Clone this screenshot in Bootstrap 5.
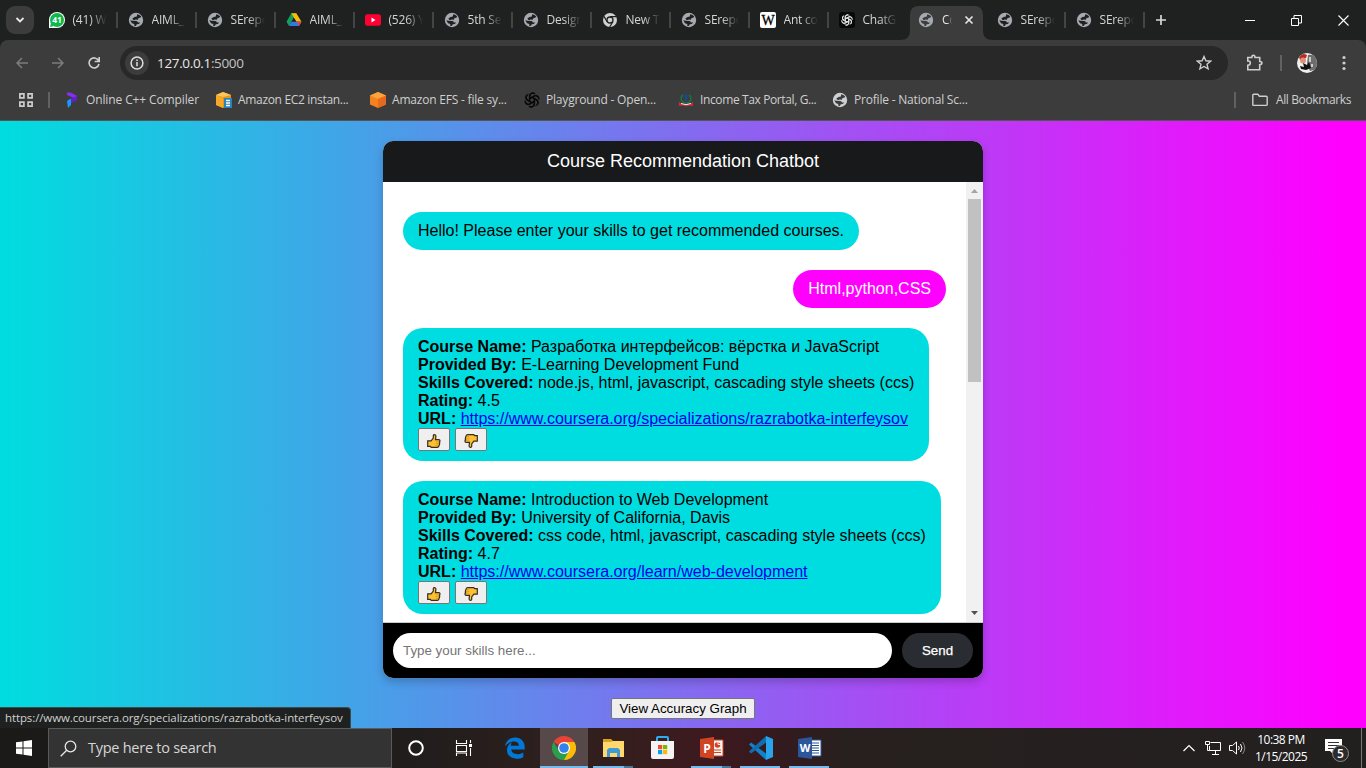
<!DOCTYPE html>
<html lang="en">
<head>
<meta charset="utf-8">
<meta name="viewport" content="width=device-width, initial-scale=1">
<title>Course Recommendation Chatbot</title>
<link href="https://cdn.jsdelivr.net/npm/bootstrap@5.3.0/dist/css/bootstrap.min.css" rel="stylesheet">
<style>
  body { font-family: "Open Sans", "Noto Sans", sans-serif; font-size: 12px; line-height: 16px; height: 768px; width: 1366px; background: #1f2120; }
  svg { display: block; flex-shrink: 0; }
  .tabstrip { height: 40px; background: #1f2120; color: #d4d4d4; }
  .tab-menu { width: 28px; height: 28px; margin: 0 5px 0 6px; border-radius: 9px; background: #3c3c3c; }
  .tab-item { width: 79px; height: 40px; padding-left: 9.5px; gap: 8px; position: relative; flex-shrink: 0; }
  .tab-item.ruled { background: linear-gradient(#444,#444) right 0 center / 2px 16px no-repeat; }
  .tab-text { width: 34px; overflow: hidden; white-space: nowrap; letter-spacing: -.2px; -webkit-mask-image: linear-gradient(90deg,#000 50%,transparent); mask-image: linear-gradient(90deg,#000 50%,transparent); }
  .tab-item.current { padding-left: 10px; }
  .current .tab-text { width: 10px; color: #e6e6e6; }
  .current > * { position: relative; }
  .current > .tab-shape { position: absolute; left: -8px; top: 6px; }
  .toolbar { height: 46px; background: #3c3c3c; border-radius: 8px 8px 0 0; padding-right: 12px; }
  .omnibox { height: 34px; width: 1108px; border-radius: 17px; background: #282828; margin-left: 20px; padding: 0 16px 0 5px; color: #e8e8e8; }
  .info-dot { width: 24px; height: 24px; border-radius: 50%; background: #3c3c3c; }
  .host { font-size: 13.5px; letter-spacing: -.34px; margin-left: 8px; }
  .host span { color: #c4c4c4; }
  .bookmarks { height: 35px; background: #3c3c3c; color: #cfcfcf; border-bottom: 1px solid #555; padding-bottom: 6px; }
  .bm { gap: 6px; white-space: nowrap; height: 28px; flex-shrink: 0; }
  .bm span { letter-spacing: -.2px; }
  .bm .airy { letter-spacing: -.12px; }
  .bm .tight { letter-spacing: -.38px; }
  .vbar { width: 2px; height: 16px; background: #616161; }
  .page { height: 607px; background: linear-gradient(90deg,#00dddf,#f0f 98%); font-family: "Liberation Sans", Arial, sans-serif; position: relative; padding-top: 20px; }
  .chat { width: 600px; height: 537px; border-radius: 10px; overflow: hidden; background: #fff; box-shadow: 0 4px 8px rgba(0,0,0,.2); }
  .chat-head { height: 41px; background: #17191b; color: #fff; font-size: 18px; line-height: 40px; }
  .chat-log { height: 440px; padding: 30px 20px 0; font-size: 16px; line-height: 18px; color: #000; gap: 20px; }
  .bubble { background: #00dde0; border-radius: 20px; padding: 10px 15px; white-space: nowrap; }
  .bubble.mine { background: #f0f; color: #fff; }
  .bubble a { color: #00e; }
  .vote { width: 32px; height: 23px; background: #efefef; border: 1px solid #767676; border-radius: 2px; padding: 5px 0 0; }
  .scroller { width: 17px; height: 440px; background: #f1f1f1; }
  .scroller .thumb { width: 13px; height: 183px; background: #c1c1c1; }
  .chat-foot { height: 56px; background: #000; border-top: 1px solid #ccc; padding: 10px; gap: 10px; }
  .chat-foot input { height: 35px; border: 0; border-radius: 20px; padding: 0 10px; font-size: 13.33px; width: 499px; }
  .chat-foot input::placeholder { color: #757575; }
  .send { width: 71px; height: 35px; border: 0; border-radius: 20px; background: #292d31; color: #fff; font-size: 13.33px; -webkit-text-stroke: .25px #fff; }
  .graph-btn { width: 144px; height: 21px; margin-top: 20px; background: #efefef; border: 1px solid #767676; border-radius: 2px; font-size: 13.33px; line-height: 18px; padding: 0; color: #000; white-space: nowrap; }
  .status { position: absolute; left: 0; bottom: 0; width: 351px; height: 21px; background: #1f2120; color: #d0d0d0; border-top: 1px solid #3b4b4e; border-right: 1px solid #3b4b4e; border-radius: 0 4px 0 0; padding-left: 5px; font-family: "Open Sans", sans-serif; font-size: 11.5px; line-height: 20px; white-space: nowrap; letter-spacing: -.11px; }
  .taskbar { height: 40px; background: linear-gradient(90deg,#1b1a19 0,#201d1c 410px,#2b1f1d 530px,#341e1e 620px,#3d1a1f 700px,#37191e 760px,#27201f 850px,#22201f 1366px); color: #fff; }
  .start { width: 48px; }
  .search { width: 344px; height: 40px; background: #333; border: 1px solid #5b5b5b; padding-left: 11px; gap: 11px; font-size: 14.5px; color: #d6d6d6; letter-spacing: -.26px; }
  .app { width: 49px; height: 40px; position: relative; display: flex; align-items: center; justify-content: center; flex-shrink: 0; }
  .app.narrow { width: 48px; }
  .app.wide { width: 52px; padding-left: 2px; }
  .app.open::after { content: ""; position: absolute; bottom: 0; left: 4px; width: 40px; height: 2px; background: #76b9ed; }
  .app.multi::after { background: linear-gradient(90deg,#76b9ed 31px,#4c7699 31px); }
  .app.active { width: 48px; background: #57494a; margin-right: 1px; }
  .app.active::after { left: 0; width: 48px; }
  .clock { width: 60px; font-size: 12px; line-height: 17.500px; text-align: center; white-space: nowrap; letter-spacing: -.52px; }
  .notice { position: relative; width: 25px; height: 26px; top: 4px; }
  .notice b { position: absolute; left: 7px; top: 6px; width: 17px; height: 17px; border-radius: 50%; border: 1px solid #8b8b8b; background: #2c2b2b; font-size: 12px; line-height: 15px; text-align: center; font-weight: 600; }
</style>
</head>
<body class="overflow-hidden">
<svg width="0" height="0" class="position-absolute" aria-hidden="true">
  <symbol id="globe" viewBox="0 0 16 16"><circle cx="8" cy="8" r="7.2" fill="currentColor"/><path d="M9.200 2.300q2.600.2 4 2.200-.8 1.700-2.600 1.500l-.8 1.800-2.300-.4q-.6 1-2 .6L4.300 6.600 6.600 5l2.200-.6zM2.300 8.200l2.300.5 3.700.3q1.700.2 1.500 1.400l2.400.2-1.400 1.500-2 .2-1 1.800-1.600-.4.1-1.700-2.300-.8z" fill="var(--cut,#1f2120)"/></symbol>
  <symbol id="knot" viewBox="0 0 16 16"><g fill="none" stroke="currentColor" stroke-width="1.300"><path id="k" d="M5.600 9.400V4.200a3.200 3.200 0 0 1 5.500-2.200M5.600 6.600 9.800 4.200a3.200 3.200 0 0 1 4.700 1.500"/><use href="#k" transform="rotate(60 8 8)"/><use href="#k" transform="rotate(120 8 8)"/><use href="#k" transform="rotate(180 8 8)"/><use href="#k" transform="rotate(240 8 8)"/><use href="#k" transform="rotate(300 8 8)"/></g></symbol>
  <symbol id="like" viewBox="0 0 14 14"><path d="M.700 6.800h3.400L6.300 4V1.600Q6.500.600 7.600.700q1.300.2 1.300 1.400L8.500 5.600h3.300q1.300.1 1.200 1.500-.1.700-.6 1 .7.900 0 1.800.3 1-.4 1.600 0 1.700-1.600 1.800H4.200l-.8-.9H.700z" fill="#ffc132" stroke="#352e22" stroke-width="1.200"/><path d="M8.800 7.800h3M8.800 9.600h3M8.800 11.400h2.500" stroke="#d78c17" stroke-width=".7"/></symbol>
</svg>

<header>
  <div class="tabstrip d-flex align-items-center">
    <div class="tab-menu d-flex align-items-center justify-content-center"><svg width="10" height="8" viewBox="0 0 10 8"><path d="m1.500 2 3.500 3.500L8.500 2" fill="none" stroke="#e8e8e8" stroke-width="1.800"/></svg></div>
    <div class="tab-item ruled d-flex align-items-center"><svg width="16" height="16"><path d="M0 16V8a8 8 0 1 1 8 8z" fill="#fff"/><circle cx="8" cy="8" r="7" fill="#10b84c"/><path d="M1 15l1-4 3 3z" fill="#10b84c"/><text x="8" y="11" font-size="8.500" font-weight="700" fill="#fff" text-anchor="middle">41</text></svg><span class="tab-text">(41) W</span></div>
    <div class="tab-item ruled d-flex align-items-center"><svg width="16" height="16" color="#a5a9b0"><use href="#globe"/></svg><span class="tab-text">AIML_</span></div>
    <div class="tab-item ruled d-flex align-items-center"><svg width="16" height="16" color="#a5a9b0"><use href="#globe"/></svg><span class="tab-text">SErepo</span></div>
    <div class="tab-item ruled d-flex align-items-center"><svg width="16" height="16"><path d="M5.300 1.300h5L8 5.300 3 14 .500 9.800z" fill="#159f55"/><path d="M5.300 1.300h5l5.200 8.500h-5z" fill="#fbbc04"/><path d="M5.400 9.800h10.100L13 14H3z" fill="#3478e5"/><path d="m11 9.800 2 4.200 2.500-4.200z" fill="#e94235"/></svg><span class="tab-text">AIML_</span></div>
    <div class="tab-item ruled d-flex align-items-center"><svg width="16" height="16"><rect y="2.300" width="16" height="11.500" rx="2.500" fill="#ff0033"/><path d="m6.500 5.500 4 2.500-4 2.500z" fill="#fff"/></svg><span class="tab-text">(526) Y</span></div>
    <div class="tab-item ruled d-flex align-items-center"><svg width="16" height="16" color="#a5a9b0"><use href="#globe"/></svg><span class="tab-text">5th Ser</span></div>
    <div class="tab-item ruled d-flex align-items-center"><svg width="16" height="16" color="#a5a9b0"><use href="#globe"/></svg><span class="tab-text">Design</span></div>
    <div class="tab-item ruled d-flex align-items-center"><svg width="16" height="16"><circle cx="8" cy="8" r="7" fill="#d0d0d0"/><circle cx="8" cy="8" r="3" fill="#d0d0d0" stroke="#1f2120" stroke-width="1.300"/><path d="M8 4.700h6.300M5.100 9.700 2 4.400M10.900 9.700 7.700 15" stroke="#1f2120" stroke-width="1.200"/></svg><span class="tab-text">New Ta</span></div>
    <div class="tab-item ruled d-flex align-items-center"><svg width="16" height="16" color="#a5a9b0"><use href="#globe"/></svg><span class="tab-text">SErepo</span></div>
    <div class="tab-item ruled d-flex align-items-center"><svg width="16" height="16"><rect width="16" height="16" rx="2" fill="#fff"/><text x="8" y="12.500" font-family="Liberation Serif" font-size="14" fill="#000" stroke="#000" stroke-width=".3" text-anchor="middle">W</text></svg><span class="tab-text">Ant col</span></div>
    <div class="tab-item d-flex align-items-center"><svg width="16" height="16" color="#e5e5e5"><rect width="16" height="16" rx="3" fill="#080808"/><use href="#knot" x="2" y="2" width="12" height="12"/></svg><span class="tab-text">ChatGP</span></div>
    <div class="tab-item current d-flex align-items-center"><svg class="tab-shape" width="93" height="34"><path d="M0 34q10 0 10-9V9Q10 0 19 0h55q9 0 9 9v16q0 9 10 9z" fill="#3c3c3c"/></svg><svg width="16" height="16" style="--cut:#3c3c3c" color="#a5a9b0"><use href="#globe"/></svg><span class="tab-text">Co</span><svg width="10" height="10" viewBox="0 0 10 10" class="ms-1"><path d="m1.500 1.500 7 7m0-7-7 7" stroke="#e5e5e5" stroke-width="1.700"/></svg></div>
    <div class="tab-item ruled d-flex align-items-center"><svg width="16" height="16" color="#a5a9b0"><use href="#globe"/></svg><span class="tab-text">SErepo</span></div>
    <div class="tab-item ruled d-flex align-items-center"><svg width="16" height="16" color="#a5a9b0"><use href="#globe"/></svg><span class="tab-text">SErepo</span></div>
    <svg width="12" height="12" style="margin-left:10px"><path d="M6 1v10M1 6h10" stroke="#d6d6d6" stroke-width="1.700"/></svg>
    <div class="d-flex align-items-center ms-auto" style="gap:36px;padding-right:17px"><svg width="10" height="10"><path d="M0 5.500h10" stroke="#fff"/></svg><svg width="11" height="11"><path d="M.500 3.500h7v7h-7zM3 3V.500h7.500V8H8" fill="none" stroke="#fff"/></svg><svg width="11" height="11"><path d="m.500.500 10 10m0-10-10 10" stroke="#fff" stroke-width="1.100"/></svg></div>
  </div>

  <div class="toolbar d-flex align-items-center">
    <div class="d-flex align-items-center" style="padding-left:16px;gap:24px">
      <svg width="12" height="12"><path d="M12 6H1m5-5L1 6l5 5" fill="none" stroke="#7c7c7c" stroke-width="1.500"/></svg>
      <svg width="12" height="12"><path d="M0 6h11M6 1l5 5-5 5" fill="none" stroke="#7c7c7c" stroke-width="1.500"/></svg>
      <svg width="12" height="12"><path d="M10.500 3.500A5 5 0 1 0 11 7M11.200 0v4.500H6.700" fill="none" stroke="#d0d0d0" stroke-width="1.600"/></svg>
    </div>
    <div class="omnibox d-flex align-items-center">
      <span class="info-dot d-flex align-items-center justify-content-center"><svg width="14" height="14"><circle cx="7" cy="7" r="5.900" fill="none" stroke="#dedede" stroke-width="1.500"/><path d="M7 6v4.300M7 3.500V5" stroke="#dedede" stroke-width="1.500"/></svg></span>
      <span class="host">127.0.0.1<span>:5000</span></span>
      <svg width="16" height="16" class="ms-auto"><path d="m8 1.500 1.900 4.300 4.700.4L11 9.300l1.100 4.600L8 11.500l-4.100 2.400L5 9.300 1.400 6.200l4.700-.4z" fill="none" stroke="#cecece" stroke-width="1.400"/></svg>
    </div>
    <svg width="18" height="18" style="margin-left:18px"><path d="M1.800 3.500h4q0-2.300 1.600-2.300t1.600 2.300h4.700v4q2.200 0 2.200 1.600t-2.200 1.600v5H1.800v-4.400q2.500 0 2.500-2.200T1.800 7z" fill="none" stroke="#cecece" stroke-width="1.600"/></svg>
    <span class="vbar" style="margin-left:16px"></span>
    <svg width="20" height="20" style="margin-left:15px"><defs><clipPath id="av"><circle cx="10" cy="10" r="10"/></clipPath></defs><g clip-path="url(#av)"><path fill="#f1efed" d="M0 0h20v20H0z"/><path d="M2 4q3-5 8-2l-1 3-6 2z" fill="#b52c20"/><circle cx="6" cy="7.500" r="3" fill="#dc9379"/><path d="M11 2q7-1 9 5v9l-7 2-3-7z" fill="#6d6d6d"/><path d="m6 10 4 2 2-3 2 6-5 2-5-1-1-3 4 1z" fill="#111"/><path d="M12 4h2v5h-2zM14 11h2v3h-2z" fill="#ccc"/></g></svg>
    <svg width="4" height="16" class="ms-auto" style="margin-right:8px"><g fill="#cecece"><circle cx="2" cy="2.500" r="1.600"/><circle cx="2" cy="8" r="1.600"/><circle cx="2" cy="13.500" r="1.600"/></g></svg>
  </div>

  <div class="bookmarks d-flex align-items-center">
    <svg width="14" height="14" style="margin-left:19px"><path d="M.900.900h4v4h-4zm8.200 0h4v4h-4zM.900 9.100h4v4h-4zm8.200 0h4v4h-4z" fill="none" stroke="#cecece" stroke-width="1.700"/></svg>
    <span class="vbar" style="margin-left:15px"></span>
    <div class="d-flex bm align-items-center" style="margin-left:14px;width:152px"><svg width="16" height="16"><path d="M3 .500h3.500L13 4v4L6 11l4-5-7-3z" fill="#8730f5"/><path d="M7 6.500 13 4v4L7 11z" fill="#6420c4"/><path d="M3 9l4-2.500V13l-3 3z" fill="#1899ff"/></svg><span class="airy">Online C++ Compiler</span></div>
    <div class="d-flex bm align-items-center" style="width:154px"><svg width="16" height="16"><path d="M0 3 7 0l8 3v10l-8 3-7-3z" fill="#e8941b"/><path d="m0 3 7-3 8 3-8 2z" fill="#ffc65c"/><path d="M0 3.500 7 5.500V16l-7-3z" fill="#f5a927"/><path d="M8 6h8v10H8z" fill="#2a84b8"/><path d="M10 8.500h4m-4 2.500h4m-4 2.500h4" stroke="#fff" stroke-width="1.300"/></svg><span style="letter-spacing:-.32px">Amazon EC2 instan...</span></div>
    <div class="d-flex bm align-items-center" style="width:154px"><svg width="16" height="16"><path d="m8 0 8 3.500v9L8 16l-8-3.500v-9z" fill="#f58220"/><path d="m0 3.500 8-3.500 8 3.500L8 7z" fill="#fba43b"/><path d="m8 7 8-3.500v9L8 16z" fill="#e86a1d"/></svg><span>Amazon EFS - file sy...</span></div>
    <div class="d-flex bm align-items-center" style="width:154px"><svg width="16" height="16" color="#080808"><use href="#knot"/></svg><span>Playground - Open...</span></div>
    <div class="d-flex bm align-items-center" style="width:154px"><svg width="16" height="16"><path d="M5 3a5 4.500 0 1 0 6 0" fill="none" stroke="#167347" stroke-width="1.600"/><path d="M8 2v7M6.500 4.500h3" stroke="#164a99" stroke-width="2"/><path d="m1 9.500 2 2q5 2.500 10 0l2-2v4.500l-3-.5q-4 1.500-8 0L1 14z" fill="#d3283b"/><path d="M3 11.500q5 2.400 10 0" fill="none" stroke="#eee"/></svg><span class="tight">Income Tax Portal, G...</span></div>
    <div class="d-flex bm align-items-center"><svg width="16" height="16" color="#cdd0d3" style="--cut:#3c3c3c"><use href="#globe"/></svg><span>Profile - National Sc...</span></div>
    <span class="vbar ms-auto"></span>
    <div class="d-flex bm align-items-center" style="margin-left:16px;padding-right:15px;gap:8px"><svg width="16" height="14"><path d="M.800 2.200q0-1 1-1h4l1.600 2h6.800q1 0 1 1v7.200q0 1-1 1H1.800q-1 0-1-1z" fill="none" stroke="#cecece" stroke-width="1.400"/></svg><span class="tight">All Bookmarks</span></div>
  </div>
</header>

<main class="page d-flex flex-column align-items-center">
  <section class="chat d-flex flex-column">
    <h1 class="chat-head text-center m-0 fw-normal">Course Recommendation Chatbot</h1>
    <div class="d-flex">
      <div class="chat-log d-flex flex-column flex-grow-1 align-items-start">
        <div class="bubble">Hello! Please enter your skills to get recommended courses.</div>
        <div class="bubble mine align-self-end">Html,python,CSS</div>
        <div class="bubble">
          <div><strong>Course Name:</strong> Разработка интерфейсов: вёрстка и JavaScript</div>
          <div><strong>Provided By:</strong> E-Learning Development Fund</div>
          <div><strong>Skills Covered:</strong> node.js, html, javascript, cascading style sheets (ccs)</div>
          <div><strong>Rating:</strong> 4.5</div>
          <div><strong>URL:</strong> <a href="#">https://www.coursera.org/specializations/razrabotka-interfeysov</a></div>
          <div class="d-flex" style="gap:5px"><button class="vote d-flex justify-content-center" aria-label="Like"><svg width="14" height="14"><use href="#like"/></svg></button><button class="vote d-flex justify-content-center" aria-label="Dislike"><svg width="14" height="14"><use href="#like" transform="rotate(180 7 7)"/></svg></button></div>
        </div>
        <div class="bubble">
          <div><strong>Course Name:</strong> Introduction to Web Development</div>
          <div><strong>Provided By:</strong> University of California, Davis</div>
          <div><strong>Skills Covered:</strong> css code, html, javascript, cascading style sheets (ccs)</div>
          <div><strong>Rating:</strong> 4.7</div>
          <div><strong>URL:</strong> <a href="#">https://www.coursera.org/learn/web-development</a></div>
          <div class="d-flex" style="gap:5px"><button class="vote d-flex justify-content-center" aria-label="Like"><svg width="14" height="14"><use href="#like"/></svg></button><button class="vote d-flex justify-content-center" aria-label="Dislike"><svg width="14" height="14"><use href="#like" transform="rotate(180 7 7)"/></svg></button></div>
        </div>
      </div>
      <div class="scroller d-flex flex-column align-items-center">
        <svg width="17" height="17"><path d="m5 11 3.500-4 3.500 4z" fill="#a3a3a3"/></svg>
        <div class="thumb"></div>
        <svg width="17" height="17" class="mt-auto"><path d="m5 6 3.500 4L12 6z" fill="#505050"/></svg>
      </div>
    </div>
    <div class="chat-foot d-flex"><input type="text" placeholder="Type your skills here..."><button class="send">Send</button></div>
  </section>
  <button class="graph-btn">View Accuracy Graph</button>
  <div class="status">https://www.coursera.org/specializations/razrabotka-interfeysov</div>
</main>

<footer class="taskbar d-flex align-items-center">
  <div class="start d-flex justify-content-center"><svg width="16" height="16"><path d="M0 2.300 6.500 1.400v6H0zM7.500 1.200 16 0v7.400H7.500zM0 8.400h6.500v6.200L0 13.700zM7.500 8.400H16V16l-8.500-1.200z" fill="#fff"/></svg></div>
  <div class="search d-flex align-items-center"><svg width="17" height="17"><circle cx="10.500" cy="6.500" r="5.300" fill="none" stroke="#e6e6e6" stroke-width="1.300"/><path d="m6.700 10.300-6 6" stroke="#e6e6e6" stroke-width="1.300"/></svg><span>Type here to search</span></div>
  <div class="app narrow"><svg width="16" height="16"><circle cx="8" cy="8" r="6.800" fill="none" stroke="#fff" stroke-width="2"/></svg></div>
  <div class="app narrow"><svg width="18" height="16"><path d="M1.500 0v3.500h10V0M1.500 5.500h10v6h-10zM1.500 16v-3h10v3M15.500 0v3M15.500 8v8" fill="none" stroke="#fff" stroke-width="1.100"/><path d="M14 4h3v3h-3z" fill="#fff"/></svg></div>
  <div class="app wide"><svg width="22" height="22" viewBox="0 0 22 22"><path d="M1 9.300C2 3.500 6.200.500 11.200.500c6.300 0 9.500 4.800 9.500 9.300v2.700H7.300c.2 4.900 7.300 6 12 2.900v4.800C11.500 23.900 2.800 20.500 3 13.200c0-3.700 2-6.500 4.800-7.900-.6 1-1 2.200-1 3.400h8.100c.3-5.700-9.400-5.600-13.900.6z" fill="#0078d7"/></svg></div>
  <div class="app open active"><svg width="24" height="24" viewBox="0 0 24 24"><path d="M12 12 1.600 6A12 12 0 0 1 22.400 6z" fill="#e94335"/><path d="M12 12V6h10.400A12 12 0 0 1 12 24z" fill="#fbbc05"/><path d="M1.600 6 7 15l5 3 5-3-5 9A12 12 0 0 1 1.600 6z" fill="#299f4b"/><circle cx="12" cy="12" r="6" fill="#fff"/><circle cx="12" cy="12" r="4.800" fill="#3381ed"/></svg></div>
  <div class="app open multi"><svg width="22" height="20"><path d="M0 1h8l2 2h11v3H0z" fill="#dba01d"/><path d="M0 4h8l2-1h11v16H0z" fill="#ffd96b"/><path d="M4 19v-7l2-2h9l2 2v7h-3v-4H7v4z" fill="#409ad7"/></svg></div>
  <div class="app"><svg width="24" height="24"><path d="M6 6V2q0-1 1-1h9q1 0 1 1v4" fill="none" stroke="#2badef" stroke-width="2"/><path d="M0 5h23v16q0 2-2 2H2q-2 0-2-2z" fill="#f4f4f4"/><path d="M7 9h4.200v4.200H7z" fill="#f04e23"/><path d="M12 9h4.200v4.200H12z" fill="#7db700"/><path d="M7 14h4.200v4.200H7z" fill="#00a3ee"/><path d="M12 14h4.200v4.200H12z" fill="#ffb900"/></svg></div>
  <div class="app open multi"><svg width="24" height="22"><path d="M12 3h11v16H12z" fill="#f8f1ef" stroke="#d04424"/><circle cx="17.500" cy="8" r="2.800" fill="#d04424"/><path d="M18 4.500v3h3" stroke="#f8f1ef" fill="none"/><path d="M14 13h7m-7 2.500h7" stroke="#d04424"/><path d="m0 2 14-2v22L0 20z" fill="#d04424"/><text x="7" y="15.500" font-family="Open Sans" font-size="12" font-weight="700" fill="#fff" text-anchor="middle">P</text></svg></div>
  <div class="app open"><svg width="24" height="24"><path d="M17 0v24L0 8.500 2 6.500l15 11z" fill="#1183ca"/><path d="M17 0 0 15.500l2 2 15-11z" fill="#0f6eb2"/><path d="m17 0 7 3v18l-7 3z" fill="#28a4ed"/></svg></div>
  <div class="app open"><svg width="24" height="22"><path d="M12 3h11v16H12z" fill="#fff" stroke="#2b579a"/><path d="M14 6h7m-7 2.500h7M14 11h7m-7 2.500h7M14 16h7" stroke="#2b579a"/><path d="m0 2 14-2v22L0 20z" fill="#2b579a"/><text x="7" y="15" font-family="Open Sans" font-size="11" font-weight="700" fill="#fff" text-anchor="middle">W</text></svg></div>
  <div class="ms-auto d-flex align-items-center">
    <svg width="12" height="8"><path d="m.500 7 5.500-5.500L11.500 7" fill="none" stroke="#fff" stroke-width="1.200"/></svg>
    <svg width="17" height="14" style="margin-left:10px"><path d="M5.500 1.500h10v8h-11V5M10.500 10v3M7 13.500h7M.500.500h4v3h-4zM2.500 4v5.500h2" fill="none" stroke="#fff"/></svg>
    <svg width="17" height="16" style="margin-left:7px"><path d="M.500 5.500h3l4-3.500v12l-4-3.500h-3zM9.500 6q1.500 2 0 4" fill="none" stroke="#fff"/><path d="M11.500 4q3 4 0 8" fill="none" stroke="#fff"/><path d="M13.500 2q4.500 6 0 12" fill="none" stroke="#888"/></svg>
    <div class="clock" style="margin-left:5px">10:38 PM<br>1/15/2025</div>
    <div class="notice" style="margin-left:14px"><svg width="17" height="18"><path d="M0 0h17v12H9v4l-4-4H0z" fill="#fff"/><path d="M3 3.500h11M3 6.500h11M3 9.500h6" stroke="#333"/></svg><b>5</b></div>
    <div style="width:11px"></div>
    <div style="width:5px;height:40px;border-left:1px solid #777"></div>
  </div>
</footer>
<script src="https://cdn.jsdelivr.net/npm/bootstrap@5.3.0/dist/js/bootstrap.bundle.min.js"></script>
</body>
</html>
